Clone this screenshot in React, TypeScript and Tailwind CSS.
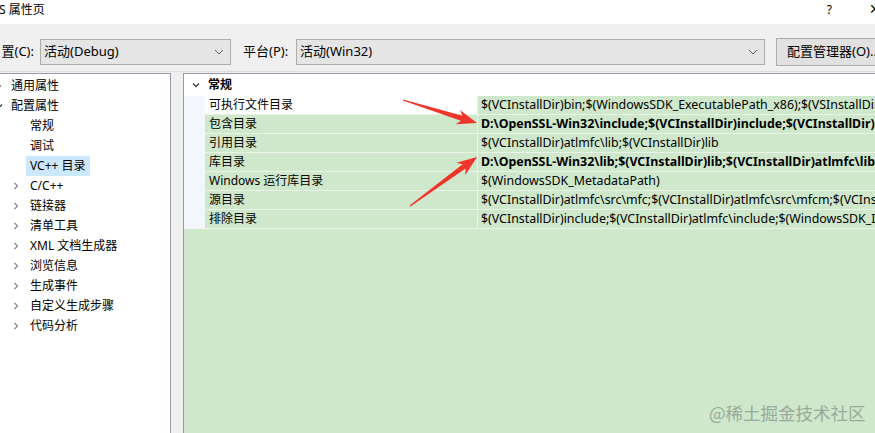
import React from 'react';

const FONT = '"Noto Sans", "Noto Sans CJK SC", sans-serif';

type Pt = [number, number];

// tapered annotation arrow, tail -> tip
function arrowPoints(tail: Pt, tip: Pt): string {
  const dx = tip[0] - tail[0];
  const dy = tip[1] - tail[1];
  const len = Math.hypot(dx, dy);
  const ux = dx / len;
  const uy = dy / len;
  const nx = -uy;
  const ny = ux;
  const headLen = 20;
  const at = (d: number, w: number): string =>
    `${(tail[0] + ux * d + nx * w).toFixed(1)},${(tail[1] + uy * d + ny * w).toFixed(1)}`;
  const base = len - headLen;
  return [
    at(0, 0.6),
    at(base + 4, 2.6),
    at(base, 7.5),
    at(len, 0),
    at(base, -7.5),
    at(base + 4, -2.6),
    at(0, -0.6),
  ].join(' ');
}

const Chevron = ({ down = false }: { down?: boolean }) => (
  <svg width="8" height="8" viewBox="0 0 8 8" className="shrink-0">
    {down ? (
      <path d="M1 2.5 L4 5.5 L7 2.5" fill="none" stroke="#404040" strokeWidth="1.3" />
    ) : (
      <path d="M2.5 1 L5.5 4 L2.5 7" fill="none" stroke="#8a8a8a" strokeWidth="1.3" />
    )}
  </svg>
);

const DropChevron = () => (
  <svg width="10" height="6" viewBox="0 0 10 6">
    <path d="M1 1 L5 5 L9 1" fill="none" stroke="#606060" strokeWidth="1" />
  </svg>
);

const treeItems: { label: string; level: number; chevron?: 'right' | 'down'; selected?: boolean }[] = [
  { label: '通用属性', level: 0, chevron: 'right' },
  { label: '配置属性', level: 0, chevron: 'down' },
  { label: '常规', level: 1 },
  { label: '调试', level: 1 },
  { label: 'VC++ 目录', level: 1, selected: true },
  { label: 'C/C++', level: 1, chevron: 'right' },
  { label: '链接器', level: 1, chevron: 'right' },
  { label: '清单工具', level: 1, chevron: 'right' },
  { label: 'XML 文档生成器', level: 1, chevron: 'right' },
  { label: '浏览信息', level: 1, chevron: 'right' },
  { label: '生成事件', level: 1, chevron: 'right' },
  { label: '自定义生成步骤', level: 1, chevron: 'right' },
  { label: '代码分析', level: 1, chevron: 'right' },
];

const props: { name: string; value: string; bold?: boolean; light?: boolean }[] = [
  {
    name: '可执行文件目录',
    value: '$(VCInstallDir)bin;$(WindowsSDK_ExecutablePath_x86);$(VSInstallDir);$(VSInstallDir)\\Common7\\Tools',
    light: true,
  },
  {
    name: '包含目录',
    value: 'D:\\OpenSSL-Win32\\include;$(VCInstallDir)include;$(VCInstallDir)atlmfc\\include',
    bold: true,
  },
  { name: '引用目录', value: '$(VCInstallDir)atlmfc\\lib;$(VCInstallDir)lib' },
  {
    name: '库目录',
    value: 'D:\\OpenSSL-Win32\\lib;$(VCInstallDir)lib;$(VCInstallDir)atlmfc\\lib;$(WindowsSDK_LibraryPath_x86)',
    bold: true,
  },
  { name: 'Windows 运行库目录', value: '$(WindowsSDK_MetadataPath)' },
  {
    name: '源目录',
    value: '$(VCInstallDir)atlmfc\\src\\mfc;$(VCInstallDir)atlmfc\\src\\mfcm;$(VCInstallDir)atlmfc\\src\\atl',
  },
  {
    name: '排除目录',
    value: '$(VCInstallDir)include;$(VCInstallDir)atlmfc\\include;$(WindowsSDK_IncludePath)',
  },
];

const App: React.FC = () => {
  return (
    <div
      className="relative w-[875px] h-[433px] overflow-hidden bg-[#f0f0f0] text-[#000] flex flex-col"
      style={{ fontFamily: FONT }}
    >
      {/* title bar */}
      <div className="h-[24px] bg-white flex items-start pt-[1px] text-[12px] shrink-0">
        <span className="-ml-[1px]">S 属性页</span>
        <span className="ml-auto mr-[37px]">?</span>
        <span className="mr-[-6px] text-[14px] font-light leading-[16px]">✕</span>
      </div>

      {/* toolbar */}
      <div className="h-[48px] flex items-start pt-[15px] text-[13px] shrink-0 border-b border-[#dcdcdc]">
        <span className="w-[40px] shrink-0 h-[26px] flex items-center justify-end pr-[6px] whitespace-nowrap overflow-hidden">
          <span className="whitespace-nowrap">置(C):</span>
        </span>
        <div className="w-[191px] shrink-0 h-[26px] bg-[#e5e5e5] border border-[#adadad] flex items-center pl-[3px] pr-[6px]">
          <span>活动(Debug)</span>
          <span className="ml-auto flex"><DropChevron /></span>
        </div>
        <span className="ml-[12px] w-[53px] h-[26px] flex items-center shrink-0 whitespace-nowrap">平台(P):</span>
        <div className="w-[469px] shrink-0 h-[26px] bg-[#e5e5e5] border border-[#adadad] flex items-center pl-[3px] pr-[6px]">
          <span>活动(Win32)</span>
          <span className="ml-auto flex"><DropChevron /></span>
        </div>
        <div className="ml-[11px] -mt-[1px] h-[28px] w-[110px] shrink-0 bg-[#e1e1e1] border border-[#adadad] flex items-center pl-[10px] whitespace-nowrap">
          配置管理器(O)...
        </div>
      </div>

      {/* main */}
      <div className="flex-1 flex min-h-0 pt-[1px]">
        {/* tree */}
        <div className="w-[171px] shrink-0 bg-white border-t border-r border-[#9a9aaa] pt-[2px] text-[12px] overflow-hidden">
          {treeItems.map((it) => (
            <div key={it.label} className="h-[20px] flex items-center relative">
              {it.chevron && (
                <span
                  className={`absolute flex ${it.level === 0 ? '-left-[5px]' : 'left-[12px]'}`}
                >
                  <Chevron down={it.chevron === 'down'} />
                </span>
              )}
              <span
                className={`h-[20px] flex items-center ${
                  it.level === 0 ? 'ml-[11px]' : 'ml-[26px] px-[4px]'
                } ${it.selected ? 'bg-[#cce8ff]' : ''}`}
              >
                {it.label}
              </span>
            </div>
          ))}
        </div>

        {/* gap */}
        <div className="w-[12px] shrink-0" />

        {/* property grid */}
        <div className="flex-1 border-t border-l border-[#9a9aaa] bg-[#cfe8cc] flex flex-col text-[12px]">
          <div className="h-[22px] flex items-center bg-white">
            <span className="w-[21px] flex justify-center pl-[2px]"><Chevron down /></span>
            <span className="ml-[3px] font-bold">常规</span>
          </div>
          {props.map((p) => (
            <div key={p.name} className="flex h-[19px] bg-[#f3f7fb]">
              <div className="w-[21px] shrink-0" />
              <div
                className={`w-[273px] shrink-0 border-b border-r border-[#eaf3e8] flex items-center pl-[4px] whitespace-nowrap ${
                  p.light ? 'bg-white' : 'bg-[#cfe8cc]'
                }`}
              >
                {p.name}
              </div>
              <div
                className={`flex-1 min-w-0 overflow-hidden border-b border-[#eaf3e8] bg-[#cfe8cc] flex items-center pl-[3px] whitespace-nowrap text-[12.4px] ${
                  p.bold ? 'font-bold' : ''
                }`}
              >
                {p.value}
              </div>
            </div>
          ))}
        </div>
      </div>

      {/* watermark */}
      <div
        className="absolute left-[709px] top-[400px] text-[17.5px] text-[#8e9a8e] opacity-80 whitespace-nowrap"
        style={{ fontFamily: '"Noto Sans CJK SC", sans-serif' }}
      >
        @稀土掘金技术社区
      </div>

      {/* red annotation arrows */}
      <svg className="absolute inset-0 pointer-events-none" width="875" height="433">
        <polygon points={arrowPoints([403, 100], [477, 123])} fill="#f0352b" />
        <polygon points={arrowPoints([410, 206], [477, 157])} fill="#f0352b" />
      </svg>
    </div>
  );
};

export default App;
